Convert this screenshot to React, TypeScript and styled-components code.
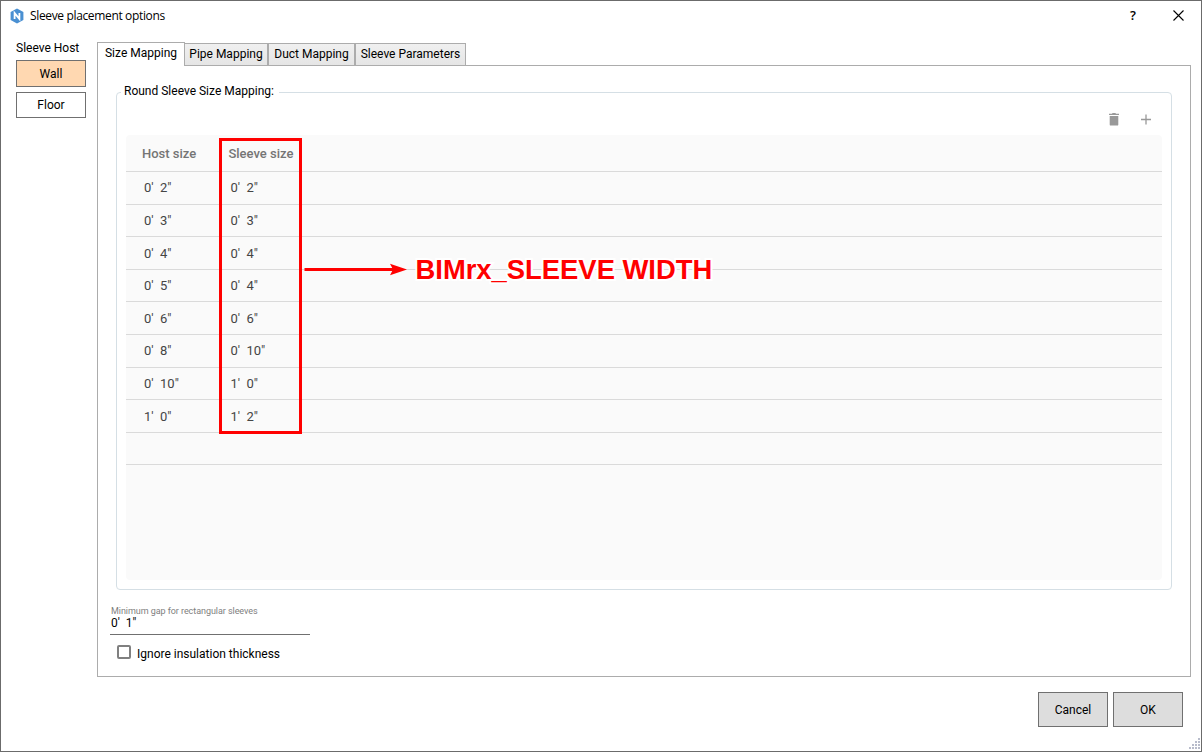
import React from "react";
import styled, { createGlobalStyle } from "styled-components";

const GlobalStyle = createGlobalStyle`
  * { box-sizing: border-box; }
  body { margin: 0; background: #fff; overflow: hidden; }
  button { font: inherit; color: inherit; padding: 0; }
`;

const Dialog = styled.main`
  position: relative;
  display: flex;
  flex-direction: column;
  width: 1202px;
  height: 752px;
  border: 1px solid #6b6b6b;
  background: #fff;
  color: #000;
  font: 12px/16px Roboto, sans-serif;
`;

const TitleBar = styled.header`
  display: flex;
  align-items: center;
  height: 29px;
  padding: 0 17px 0 9px;
  font: 12px/16px "Open Sans", sans-serif;
`;

const Title = styled.h1`
  flex: 1;
  margin: 0 0 0 6px;
  font-size: 12px;
  font-weight: 400;
  letter-spacing: -0.35px;
`;

const WindowButton = styled.button`
  display: flex;
  align-items: center;
  justify-content: center;
  width: 12px;
  height: 16px;
  margin: -1px 0 0 33px;
  border: 0;
  background: none;
  font-size: 13px;
  font-weight: 600;
`;

const Body = styled.div`
  display: flex;
  height: 647px;
`;

const HostPane = styled.aside`
  display: flex;
  flex-direction: column;
  width: 70px;
  margin-left: 15px;
  padding-top: 10px;
`;

const HostLabel = styled.div`
  height: 20px;
`;

const HostButton = styled.button<{ $selected?: boolean; $height: number }>`
  height: ${(p) => p.$height}px;
  margin-bottom: 5px;
  border: 1px solid #707070;
  background: ${(p) => (p.$selected ? "#ffd8b1" : "#fff")};
`;

const Tabs = styled.section`
  display: flex;
  flex-direction: column;
  width: 1094px;
  margin-left: 11px;
  padding-top: 12px;
`;

const TabList = styled.div`
  display: flex;
  align-items: flex-end;
  height: 23px;
`;

const Tab = styled.button<{ $active?: boolean; $width: number }>`
  position: relative;
  z-index: ${(p) => (p.$active ? 1 : 0)};
  width: ${(p) => p.$width}px;
  height: ${(p) => (p.$active ? 24 : 22)}px;
  margin-bottom: ${(p) => (p.$active ? -1 : 0)}px;
  padding-bottom: ${(p) => (p.$active ? 4 : 2)}px;
  border: 1px solid #acacac;
  border-bottom: 0;
  background: ${(p) => (p.$active ? "#fff" : "linear-gradient(#f0f0f0, #e5e5e5)")};
  white-space: nowrap;

  &:nth-child(2) { margin-left: -1px; }
`;

const Panel = styled.div`
  height: 612px;
  border: 1px solid #acacac;
  padding: 17px 18px 0;
`;

const Group = styled.fieldset`
  height: 507px;
  margin: 0;
  padding: 0 9px;
  border: 1px solid #d5dfe5;
  border-radius: 4px;
  min-width: 0;
`;

const Legend = styled.legend`
  height: 18px;
  margin-left: -5px;
  padding: 0 5px 0 3px;
  line-height: 16px;
`;

const Toolbar = styled.div`
  display: flex;
  justify-content: flex-end;
  align-items: center;
  gap: 18px;
  height: 34px;
  padding: 2px 8px 0 0;
`;

const Grid = styled.div`
  height: 445px;
  border-radius: 4px;
  background: #fafafa;
  color: #454545;
  font-size: 13px;
`;

const Row = styled.div<{ $height: number; $head?: boolean; $low?: boolean }>`
  display: grid;
  grid-template-columns: 86.4px 1fr;
  align-items: center;
  height: ${(p) => p.$height}px;
  padding-top: ${(p) => (p.$low ? 2 : 0)}px;
  padding-left: ${(p) => (p.$head ? 16 : 18)}px;
  border-bottom: 1px solid #dadada;
  color: ${(p) => (p.$head ? "#757575" : "inherit")};
  font-weight: ${(p) => (p.$head ? 500 : 400)};
  white-space: pre;
`;

const Field = styled.label`
  display: block;
  width: 200px;
  height: 31px;
  margin: 14px 0 0 -6px;
  padding-left: 1px;
  border-bottom: 1px solid #707070;
`;

const FieldLabel = styled.div`
  height: 12px;
  color: #808080;
  font-size: 9px;
  line-height: 14px;
  letter-spacing: -0.06px;
`;

const FieldValue = styled.div`
  line-height: 14px;
  white-space: pre;
`;

const CheckRow = styled.label`
  display: flex;
  align-items: center;
  gap: 6px;
  margin: 11px 0 0 1px;
`;

const CheckBox = styled.span`
  width: 14px;
  height: 14px;
  margin-top: -4px;
  border: 2px solid #808080;
  border-radius: 2px;
`;

const Footer = styled.footer`
  display: flex;
  justify-content: flex-end;
  gap: 5px;
  padding: 15px 18px 0 0;
`;

const ActionButton = styled.button`
  width: 70px;
  height: 35px;
  border: 1px solid #707070;
  background: #ddd;
`;

const Highlight = styled.div`
  position: absolute;
  left: 218px;
  top: 137px;
  width: 83px;
  height: 296px;
  border: 3px solid #f00;
`;

const Arrow = styled.svg`
  position: absolute;
  left: 303px;
  top: 262px;
`;

const Callout = styled.div`
  position: absolute;
  left: 414.5px;
  top: 253px;
  color: #f00;
  font: bold 27.4px/32px "Liberation Sans", sans-serif;
  white-space: nowrap;
  -webkit-text-stroke: 4px #fff;
  paint-order: stroke fill;
`;

const Grip = styled.svg`
  position: absolute;
  right: 1px;
  bottom: 2px;
`;

const tabs = [
  { name: "Size Mapping", width: 88 },
  { name: "Pipe Mapping", width: 84 },
  { name: "Duct Mapping", width: 87 },
  { name: "Sleeve Parameters", width: 111 },
];

const rows = [
  { host: `0'  2"`, sleeve: `0'  2"`, height: 33 },
  { host: `0'  3"`, sleeve: `0'  3"`, height: 32 },
  { host: `0'  4"`, sleeve: `0'  4"`, height: 33, low: true },
  { host: `0'  5"`, sleeve: `0'  4"`, height: 32 },
  { host: `0'  6"`, sleeve: `0'  6"`, height: 33, low: true },
  { host: `0'  8"`, sleeve: `0'  10"`, height: 33 },
  { host: `0'  10"`, sleeve: `1'  0"`, height: 32 },
  { host: `1'  0"`, sleeve: `1'  2"`, height: 33, low: true },
  { host: "", sleeve: "", height: 32 },
];

const gripDots = [[9, 0], [6, 3], [9, 3], [3, 6], [6, 6], [9, 6], [0, 9], [3, 9], [6, 9], [9, 9]];

export default function App() {
  return (
    <>
      <GlobalStyle />
      <Dialog>
        <TitleBar>
          <svg width="14" height="16" viewBox="0 0 14 16">
            <path d="M7 .6 13.4 4v8L7 15.4.6 12V4Z" fill="#4a90d2" />
            <path d="M4.6 11V5.1l4.8 5.8V5" fill="none" stroke="#fff" strokeWidth="1.8" />
          </svg>
          <Title>Sleeve placement options</Title>
          <WindowButton aria-label="Help">?</WindowButton>
          <WindowButton aria-label="Close">
            <svg width="11" height="11" viewBox="0 0 11 11">
              <path d="M.5.5l10 10M10.5.5l-10 10" stroke="#000" strokeWidth="1.1" />
            </svg>
          </WindowButton>
        </TitleBar>
        <Body>
          <HostPane>
            <HostLabel>Sleeve Host</HostLabel>
            <HostButton $selected $height={27}>Wall</HostButton>
            <HostButton $height={26}>Floor</HostButton>
          </HostPane>
          <Tabs>
            <TabList>
              {tabs.map((tab, i) => (
                <Tab key={tab.name} $active={i === 0} $width={tab.width}>{tab.name}</Tab>
              ))}
            </TabList>
            <Panel>
              <Group>
                <Legend>Round Sleeve Size Mapping:</Legend>
                <Toolbar>
                  <svg width="12" height="14" viewBox="0 0 12 14" fill="#999">
                    <path d="M1 1.8h3l.6-.7h2.8l.6.7h3v1.3H1ZM1.7 4h8.6v8.4c0 .8-.5 1.2-1.2 1.2H2.9c-.7 0-1.2-.4-1.2-1.2Z" />
                  </svg>
                  <svg width="16" height="14" viewBox="0 0 16 14">
                    <path d="M3 7.5h10M8 2.5v10" stroke="#999" strokeWidth="1.3" />
                  </svg>
                </Toolbar>
                <Grid>
                  <Row $head $low $height={37}><span>Host size</span><span>Sleeve size</span></Row>
                  {rows.map((row, i) => (
                    <Row key={i} $height={row.height} $low={row.low}><span>{row.host}</span><span>{row.sleeve}</span></Row>
                  ))}
                </Grid>
              </Group>
              <Field>
                <FieldLabel>Minimum gap for rectangular sleeves</FieldLabel>
                <FieldValue>{`0'  1"`}</FieldValue>
              </Field>
              <CheckRow><CheckBox />Ignore insulation thickness</CheckRow>
            </Panel>
          </Tabs>
        </Body>
        <Footer>
          <ActionButton>Cancel</ActionButton>
          <ActionButton>OK</ActionButton>
        </Footer>
        <Highlight />
        <Arrow width="104" height="14" viewBox="0 0 104 14">
          <path d="M0.5 6.5H92" stroke="#f00" strokeWidth="3" />
          <path d="M86 .7 103 6.5 86 12.3 89 6.5Z" fill="#f00" />
        </Arrow>
        <Callout>BIMrx_SLEEVE WIDTH</Callout>
        <Grip width="11" height="11" viewBox="0 0 11 11">
          {gripDots.map(([x, y]) => (
            <rect key={`${x}-${y}`} x={x} y={y} width="2" height="2" fill="#b8bccb" />
          ))}
        </Grip>
      </Dialog>
    </>
  );
}
